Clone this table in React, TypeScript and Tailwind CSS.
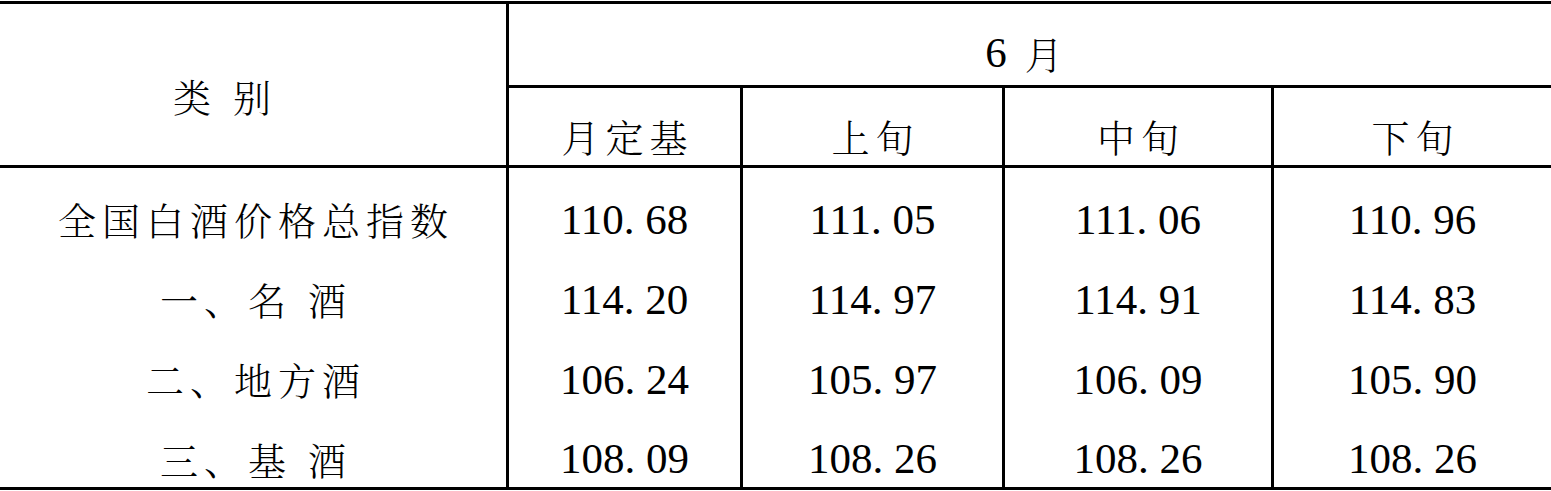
const rows = [
  { name: "全国白酒价格总指数", values: ["110.68", "111.05", "111.06", "110.96"] },
  { name: "一、名 酒", values: ["114.20", "114.97", "114.91", "114.83"] },
  { name: "二、地方酒", values: ["106.24", "105.97", "106.09", "105.90"] },
  { name: "三、基 酒", values: ["108.09", "108.26", "108.26", "108.26"] },
];

const cols = "grid grid-cols-[509px_234px_262px_269px_1fr]";
const cjk = "font-['Noto_Serif_CJK_SC','Noto_Sans_CJK_SC',serif] font-light text-[38px] tracking-[6px]";

// SimSun-style number: the period takes a half-width cell
function Num({ value }: { value: string }) {
  const [a, b] = value.split(".");
  return (
    <span className="font-['Liberation_Serif','Times_New_Roman',serif] text-[43px] leading-none">
      {a}
      <span className="inline-block w-[0.5em] text-left">.</span>
      {b}
    </span>
  );
}

export default function App() {
  return (
    <div className="w-[1551px] bg-white pt-[1px] leading-none text-black">
      <div className="border-y-[3px] border-black">
        <div className={`${cols} grid-rows-[81px_80px] border-b-[3px] border-black`}>
          <div className={`row-span-2 flex items-center justify-center border-r-[3px] border-black pt-[22px] pr-[56px] ${cjk}`}>
            类 别
          </div>
          <div className={`col-span-4 flex items-center justify-center pt-[16px] pr-[6px] ${cjk}`}>
            <span className="font-['Liberation_Serif',serif] text-[43px] tracking-normal">6</span>
            <span className="ml-[18px]">月</span>
          </div>
          {["月定基", "上旬", "中旬", "下旬"].map((h, i) => (
            <div
              key={h}
              className={`flex items-center justify-center border-t-[3px] border-black pt-[18px] pl-[6px] ${cjk} ${
                i < 3 ? "border-r-[3px]" : ""
              }`}
            >
              {h}
            </div>
          ))}
        </div>
        {rows.map((r, ri) => (
          <div key={r.name} className={`${cols} ${ri === 3 ? "h-[79px]" : "h-[80px]"}`}>
            <div className={`flex items-center justify-center border-r-[3px] border-black pt-[22px] pl-[6px] ${cjk}`}>
              {r.name}
            </div>
            {r.values.map((v, i) => (
              <div
                key={i}
                className={`flex items-center justify-center border-black pt-[22px] ${i < 3 ? "border-r-[3px]" : ""}`}
              >
                <Num value={v} />
              </div>
            ))}
          </div>
        ))}
      </div>
    </div>
  );
}
